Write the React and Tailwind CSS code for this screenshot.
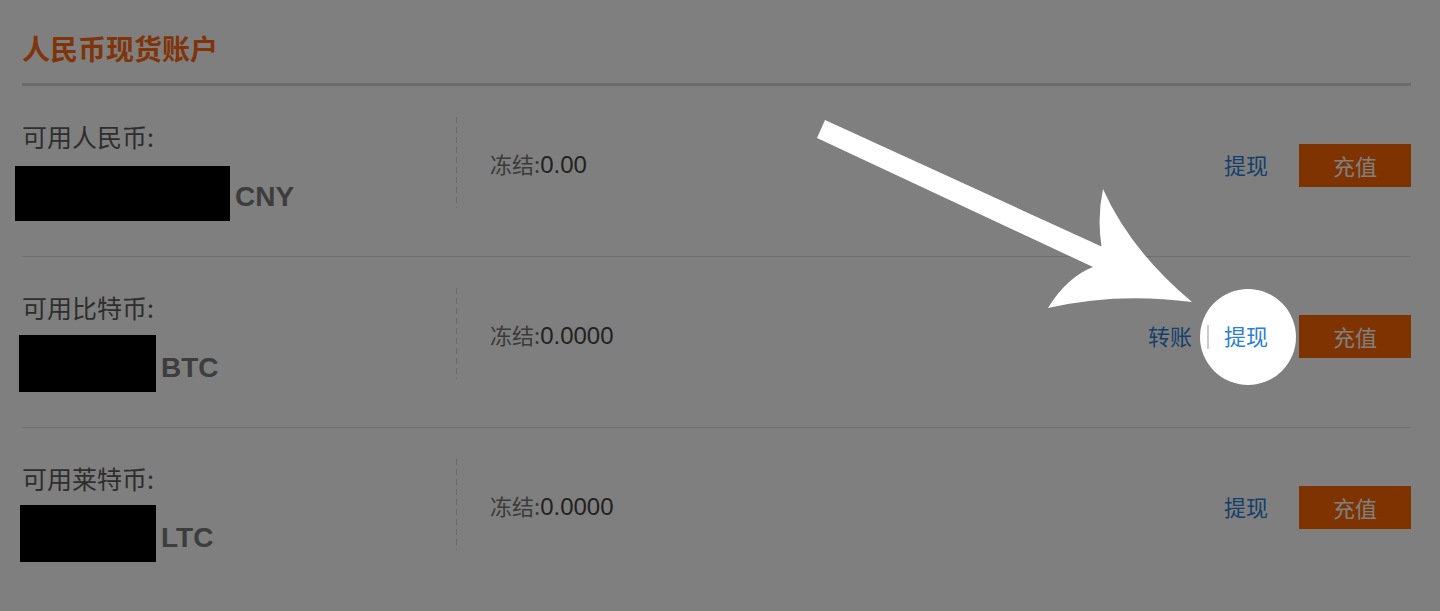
import React from 'react';

const cjk = "font-['Noto_Sans_CJK_SC','Noto_Sans',sans-serif]";
const latin = "font-['Liberation_Sans',Arial,sans-serif]";

const accounts = [
  { label: '可用人民币:', unit: 'CNY', frozen: '0.00', box: 'w-[215px] h-[55px] ml-[-7px] mt-[14px]', transfer: false },
  { label: '可用比特币:', unit: 'BTC', frozen: '0.0000', box: 'w-[137px] h-[57px] ml-[-3px] mt-[12px]', transfer: true },
  { label: '可用莱特币:', unit: 'LTC', frozen: '0.0000', box: 'w-[136px] h-[57px] ml-[-2px] mt-[11px]', transfer: false },
];

const AccountRow = ({ account, last }) => (
  <div className={`flex h-[171px] ${last ? '' : 'border-b border-[#e2e2e2]'}`}>
    <div className="w-[434px] shrink-0 pt-[34px]">
      <div className={`${cjk} text-[25px] leading-[32px] text-[#5c5c5c]`}>{account.label}</div>
      <div className="flex items-end">
        {/* redacted balance */}
        <div className={`bg-black ${account.box}`} />
        <span className={`${latin} ml-[5px] mb-[10px] text-[28px] leading-none font-bold text-[#7a7a7a]`}>
          {account.unit}
        </span>
      </div>
    </div>

    <div className="mt-[31px] h-[91px] w-px shrink-0 bg-[linear-gradient(to_bottom,#d4d4d4_60%,transparent_60%)] bg-[length:1px_10px] bg-repeat-y" />

    <div className="mt-[31px] flex h-[90px] flex-1 items-center pl-[33px] pt-[5px]">
      <span className={`${cjk} text-[22px] text-[#777]`}>
        冻结:<span className={`${latin} text-[24px] text-[#444]`}>{account.frozen}</span>
      </span>
    </div>

    <div className="mt-[58px] flex h-[43px] items-center">
      {account.transfer && (
        <>
          <a className={`${cjk} pb-[4px] text-[22px] leading-none text-[#2b7fd4]`}>转账</a>
          <span className="mx-[15px] h-[24px] w-[2px] bg-[#cccccc]" />
        </>
      )}
      <a className={`${cjk} pb-[4px] text-[22px] leading-none text-[#2b7fd4]`}>提现</a>
      <button className={`${cjk} ml-[31px] h-[43px] w-[112px] bg-[#ff6600] text-[22px] text-white`}>
        充值
      </button>
    </div>
  </div>
);

const App = () => {
  return (
    <div className="relative h-[611px] w-full overflow-hidden bg-white">
      <div className="pl-[22px] pr-[29px]">
        <h2
          className={`${cjk} border-b-[3px] border-[#d6d6d6] pt-[28px] pb-[15px] text-[28px] leading-[40px] font-bold text-[#ff6a12]`}
        >
          人民币现货账户
        </h2>
        {accounts.map((account, i) => (
          <AccountRow key={account.unit} account={account} last={i === accounts.length - 1} />
        ))}
      </div>

      {/* tutorial spotlight */}
      <div className="pointer-events-none absolute left-[1200px] top-[289px] h-[96px] w-[96px] rounded-full shadow-[0_0_0_3000px_rgba(0,0,0,0.5)]" />

      <svg
        className="pointer-events-none absolute left-0 top-0"
        width="1440"
        height="611"
        viewBox="0 0 1440 611"
      >
        <path
          d="M825 120 L1101.5 246.5 Q1097 217 1103 189 Q1130 250 1192 302 Q1117 292 1048 308 Q1067 277 1093 267 L817 138 Z"
          fill="#fff"
        />
      </svg>
    </div>
  );
};

export default App;
